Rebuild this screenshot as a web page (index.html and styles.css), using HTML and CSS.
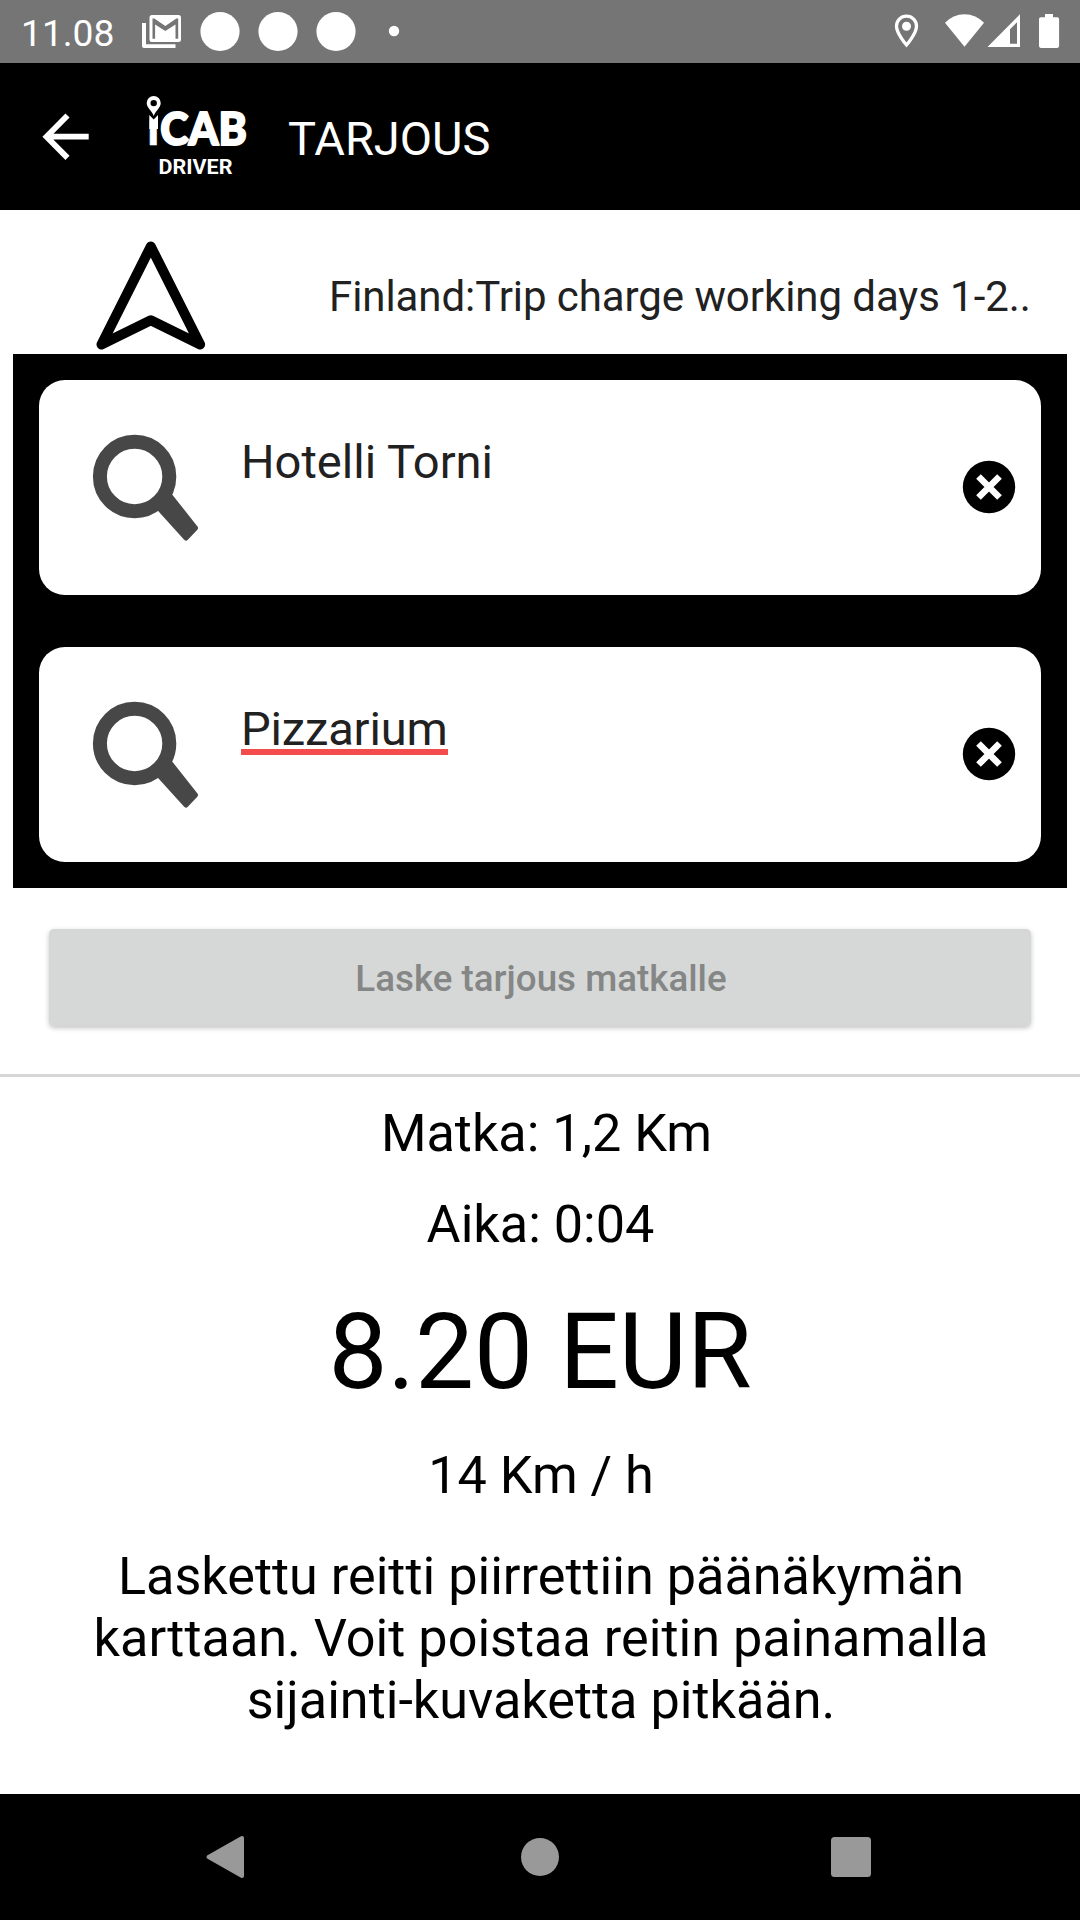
FILE: index.html
```html
<!DOCTYPE html>
<html lang="fi">
<head>
<meta charset="utf-8">
<title>Tarjous</title>
<link rel="stylesheet" href="styles.css">
</head>
<body>
<div class="screen">
  <header class="status">
    <span class="clock">11.08</span>
    <svg class="status-left" width="262" height="63" viewBox="140 0 262 63" fill="#fff">
      <path d="M142 23h4v21.300h29.500v3.700h-31.500a2 2 0 0 1-2-2z"/>
      <path fill-rule="evenodd" d="M152 15h26.500a2.500 2.500 0 0 1 2.500 2.500v22a2.500 2.500 0 0 1-2.500 2.500H152a2.500 2.500 0 0 1-2.500-2.500v-22a2.500 2.500 0 0 1 2.500-2.500zM152.500 38.800h2.600V24.500l10.200 6.500 10.200-6.500v14.300h2.700V18.500h-1.800l-11.100 7.600-11-7.600h-1.800z"/>
      <circle cx="220" cy="31.500" r="19.600"/>
      <circle cx="278" cy="31.500" r="19.600"/>
      <circle cx="336" cy="31.500" r="19.600"/>
      <circle cx="394" cy="31" r="5.200"/>
    </svg>
    <svg class="status-right" width="172" height="63" viewBox="890 0 172 63" fill="#fff">
      <path d="M906.500 16.200c-5.700 0-10 4.300-10 10 0 7.300 10 18.800 10 18.800s10-11.500 10-18.800c0-5.700-4.300-10-10-10z" fill="none" stroke="#fff" stroke-width="3.300"/>
      <circle cx="906.500" cy="26.200" r="4.500"/>
      <path d="M964.500 46.700L945 22.800q8-8.600 19.500-8.600t19.500 8.600z"/>
      <path fill-rule="evenodd" d="M987.500 47L1020 14.300V47zM1010 43.800h7V22.300l-7 7z"/>
      <path d="M1045 14h8v3.300h4.300a1.800 1.800 0 0 1 1.800 1.800v27a1.800 1.800 0 0 1-1.800 1.800h-16.500a1.800 1.800 0 0 1-1.800-1.800v-27a1.800 1.800 0 0 1 1.800-1.800h4.200z"/>
    </svg>
  </header>

  <nav class="appbar">
    <svg class="back" width="50" height="50" viewBox="41 112 50 50" fill="none" stroke="#fff" stroke-width="5.800">
      <path d="M88.700 136.700H47M67.500 115.500L46.500 136.700l21 21.200"/>
    </svg>
    <svg class="logo" width="104" height="90" viewBox="144 92 104 90" fill="#fff">
      <path d="M149.300 115l4.400 4.500 4.300-4.500v14h-8.700z"/>
      <path fill-rule="evenodd" d="M153.700 96a7 7 0 0 1 7 7c0 4.700-5 7.500-7 13-2-5.500-7-8.300-7-13a7 7 0 0 1 7-7zm0 3.900a3.200 3.200 0 1 0 0 6.400 3.200 3.200 0 0 0 0-6.400z"/>
      <text class="logo-name" y="145"><tspan x="147.300" class="logo-i">ı</tspan><tspan x="160.300" textLength="86.500" lengthAdjust="spacingAndGlyphs">CAB</tspan></text>
      <text class="logo-sub" x="158.500" y="173.800" textLength="74" lengthAdjust="spacingAndGlyphs">DRIVER</text>
    </svg>
    <h1 class="title">TARJOUS</h1>
  </nav>

  <main class="content">
    <div class="tariff">
      <svg class="compass" width="112" height="116" viewBox="95 236 112 116" fill="none" stroke="#000" stroke-width="10" stroke-linejoin="round">
        <path d="M150.800 246.500L101.500 344.500l49.300-24.200 49.300 24.200z"/>
      </svg>
      <span class="tariff-name">Finland:Trip charge working days 1-2..</span>
    </div>

    <section class="places">
      <div class="place">
        <svg class="search" width="110" height="112" viewBox="91 433 110 112">
          <circle cx="134.600" cy="476.500" r="34.700" fill="none" stroke="#474747" stroke-width="14"/>
          <path d="M157 506l12-11.500L195.500 528l-9.500 10z" fill="#474747" stroke="#474747" stroke-width="5" stroke-linejoin="round"/>
        </svg>
        <span class="place-text">Hotelli Torni</span>
        <svg class="clear" width="54" height="54" viewBox="-27 -27 54 54">
          <circle r="26.200"/>
          <path d="M-10.500-10.500L10.500 10.500M10.500-10.500L-10.500 10.500" stroke="#fff" stroke-width="6.600"/>
        </svg>
      </div>
      <div class="place">
        <svg class="search" width="110" height="112" viewBox="91 433 110 112">
          <circle cx="134.600" cy="476.500" r="34.700" fill="none" stroke="#474747" stroke-width="14"/>
          <path d="M157 506l12-11.500L195.500 528l-9.500 10z" fill="#474747" stroke="#474747" stroke-width="5" stroke-linejoin="round"/>
        </svg>
        <span class="place-text misspelled">Pizzarium</span>
        <svg class="clear" width="54" height="54" viewBox="-27 -27 54 54">
          <circle r="26.200"/>
          <path d="M-10.500-10.500L10.500 10.500M10.500-10.500L-10.500 10.500" stroke="#fff" stroke-width="6.600"/>
        </svg>
      </div>
    </section>

    <button class="calculate" disabled>Laske tarjous matkalle</button>

    <section class="result">
      <p class="distance">Matka: 1,2 Km</p>
      <p class="time">Aika: 0:04</p>
      <p class="price">8.20 EUR</p>
      <p class="speed">14 Km / h</p>
      <p class="note">Laskettu reitti piirrettiin päänäkymän<br>karttaan. Voit poistaa reitin painamalla<br>sijainti-kuvaketta pitkään.</p>
    </section>
  </main>

  <footer class="navbar">
    <svg width="42" height="48" viewBox="204 1833 42 48"><path d="M208.500 1857L242 1838v38z" fill="#999" stroke="#999" stroke-width="4" stroke-linejoin="round"/></svg>
    <svg width="44" height="40" viewBox="-24 -20 44 40"><circle r="19" fill="#999"/></svg>
    <svg width="42" height="40" viewBox="0 0 42 40"><rect x="1" width="40" height="40" rx="3.500" fill="#999"/></svg>
  </footer>
</div>
</body>
</html>
```
FILE: styles.css
```css
* { box-sizing: border-box; }

body {
  margin: 0;
  background: #fff;
  font-family: Roboto, "Liberation Sans", sans-serif;
}

p, h1 { margin: 0; font-weight: 400; }

svg { display: block; flex: none; }

.screen {
  display: flex;
  flex-direction: column;
  width: 1080px;
  height: 1920px;
  overflow: hidden;
}

.status {
  display: flex;
  height: 63px;
  padding: 0 18px 0 21px;
  background: #757575;
  color: #fff;
}

.clock {
  width: 119px;
  padding-top: 11px;
  font-size: 37.200px;
  line-height: 44px;
  white-space: nowrap;
}

.status-right { margin-left: auto; }

.appbar {
  display: flex;
  height: 147px;
  padding-left: 41px;
  background: #000;
  color: #fff;
}

.back { margin-top: 49px; }

.logo {
  margin: 29px 0 0 53px;
  overflow: visible;
}

.logo-name {
  font: 900 46px Lato, sans-serif;
  stroke: #fff;
  stroke-width: 2px;
  stroke-linejoin: round;
}

.logo-i { stroke-width: .500px; }

.logo-sub { font: 700 21px Roboto, sans-serif; }

.title {
  margin: 48px 0 0 40px;
  font-size: 47px;
  line-height: 56px;
  white-space: nowrap;
}

.content { flex: 1; }

.tariff {
  display: flex;
  height: 144px;
  padding: 26px 0 0 95px;
}

.tariff-name {
  margin: 36px 0 0 122px;
  color: #212121;
  font-size: 42px;
  letter-spacing: -.070px;
  line-height: 49px;
  white-space: nowrap;
}

.places {
  display: grid;
  gap: 52px;
  margin: 0 13px;
  padding: 26px;
  background: #000;
}

.place {
  display: flex;
  height: 215px;
  padding: 53px 25px 0 52px;
  border-radius: 26px;
  background: #fff;
}

.place-text {
  align-self: flex-start;
  margin: 1px 0 0 40px;
  color: #212121;
  font-size: 47.100px;
  line-height: 56px;
}

.misspelled {
  height: 54px;
  border-bottom: 6px solid #f44c4c;
  letter-spacing: -.180px;
}

.clear { margin: 27px 0 0 auto; }

.calculate {
  display: block;
  width: 982px;
  height: 97px;
  margin: 41px 49px 48px;
  padding: 1px 0 0 2px;
  border: 0;
  border-radius: 5px;
  background: #d6d8d7;
  box-shadow: 0 2px 5px rgba(0, 0, 0, .24);
  color: #858686;
  font: 500 36.750px Roboto, sans-serif;
}

.result {
  border-top: 3px solid #d6d6d6;
  font-size: 52.200px;
  line-height: 62px;
  text-align: center;
}

.distance { padding: 26px 0 0 13px; }

.time { padding: 29px 0 0 1px; }

.price {
  margin-top: 35px;
  font-size: 105px;
  line-height: 123px;
}

.speed { padding: 31px 0 0 2px; }

.note { padding: 39px 0 0 2px; }

.navbar {
  display: flex;
  align-items: center;
  justify-content: space-between;
  height: 126px;
  padding: 0 208px 0 204px;
  background: #000;
}
```
